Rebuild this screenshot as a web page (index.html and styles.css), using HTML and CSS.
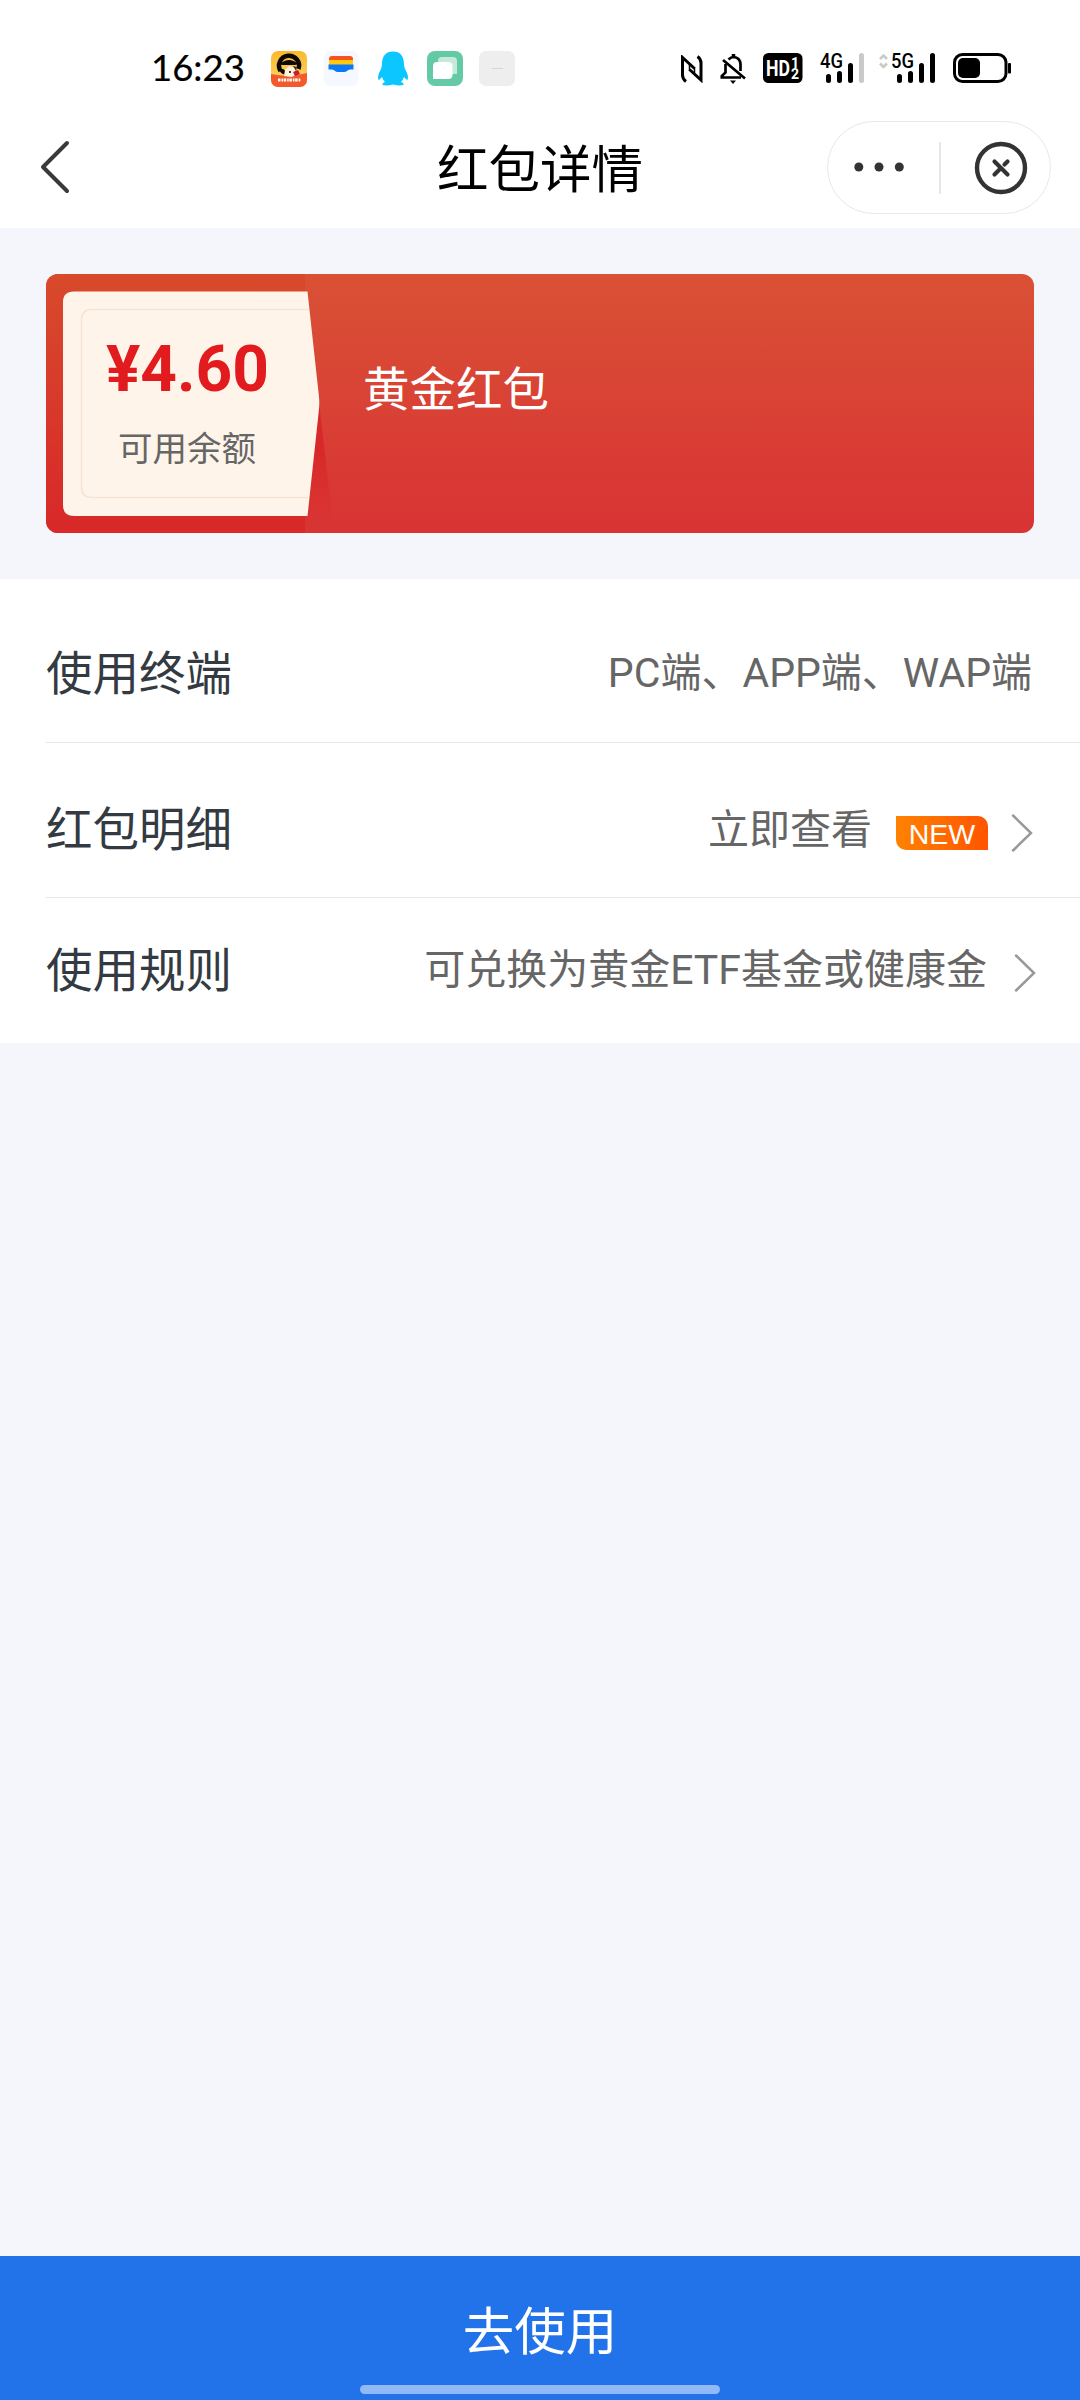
FILE: index.html
```html
<!DOCTYPE html>
<html lang="zh-CN">
<head>
<meta charset="utf-8">
<title>红包详情</title>
<link rel="stylesheet" href="styles.css">
</head>
<body>
<div class="screen">
  <header class="top">
    <div class="status">
      <span class="clock">16:23</span>
      <div class="apps">
        <svg width="36" height="36" viewBox="0 0 36 36">
          <defs>
            <linearGradient id="sun" x1="0" y1="0" x2="0" y2="1"><stop offset="0" stop-color="#f9b92c"/><stop offset="1" stop-color="#fdd66b"/></linearGradient>
            <clipPath id="r1"><rect width="36" height="36" rx="7"/></clipPath>
          </defs>
          <g clip-path="url(#r1)">
            <rect width="36" height="36" fill="url(#sun)"/>
            <path d="M0 23Q18 27 36 22V36H0Z" fill="#f4592c"/>
            <path d="M9.500 20A10 10 0 1 1 27.500 18" fill="none" stroke="#0c0805" stroke-width="4.500"/>
            <path d="M9 13Q18 5 27 13L24 14H11Z" fill="#0c0805"/>
            <path d="M8 18Q9 23 15 24L16 21L12 18Z" fill="#0c0805"/>
            <path d="M14 19l4-4 6 2 2 6-5 3-8-1z" fill="#fff3dc"/>
            <path d="M22 21l5-2 2 4-5 2z" fill="#c02030"/>
            <path d="M22 15l4 1-1 4zM18 20h2v2h-2z" fill="#4b2b3c"/>
            <path d="M7 29h23" stroke="#fff" stroke-width="3" stroke-dasharray="2.500 1 1.500 .7"/>
          </g>
        </svg>
        <svg width="36" height="36" viewBox="0 0 36 36">
          <rect x=".5" width="35" height="35" rx="7" fill="#f5f8fe"/>
          <path d="M6 10V8Q6 5 9 5H27Q30 5 30 8V10Z" fill="#f8521c"/>
          <path d="M6 9H30V14H6Z" fill="#ffc90f"/>
          <path d="M5.500 13.500H30.500V18.500H27Q25 18.500 24 20Q23 21 21 21H15Q13 21 12 20Q11 18.500 9 18.500H5.500Z" fill="#0a78f8"/>
        </svg>
        <svg width="36" height="36" viewBox="0 0 36 36">
          <path d="M18 .5C11 .5 7 5 7 13Q7 16 5.500 19Q2 25 3.500 29Q5 29 7 26Q8 29 10 31Q7 32 7.500 34Q12 35 18 33.500Q24 35 28.500 34Q29 32 26 31Q28 29 29 26Q31 29 32.500 29Q34 25 30.500 19Q29 16 29 13C29 5 25 .5 18 .5Z" fill="#0cc7ff"/>
        </svg>
        <svg width="36" height="36" viewBox="0 0 36 36">
          <rect width="36" height="35" rx="8" fill="#64caa6"/>
          <path d="M11 10Q11 6 15 6H26Q30 6 30 10V23H11Z" fill="#c3eadd"/>
          <path d="M6 15Q6 11 10 11H21Q25.500 11 25.500 15V24Q25.500 28 21 28H6Z" fill="#fff"/>
        </svg>
        <svg width="36" height="36" viewBox="0 0 36 36">
          <rect width="36" height="35" rx="7" fill="#eee"/>
          <path d="M13 17.500H24" stroke="#d6d6d6" stroke-width="1"/>
        </svg>
      </div>
      <div class="signals">
        <svg class="nfc" width="22" height="28" viewBox="0 0 22 28" fill="none" stroke="#000" stroke-width="3">
          <path d="M5 26.500Q1.500 24 1.500 20V2.500L13.500 13.500M8.500 14.500L20 25V8Q20 4 16.500 1.500"/><path d="M8.500 10V16M13.500 12V18" stroke-width="1.500"/>
        </svg>
        <svg class="bell" width="26" height="31" viewBox="0 0 26 31" fill="none" stroke="#000" stroke-width="2.700">
          <path d="M3 7L25 25.500"/><path d="M8.500 6.500Q11 4 13.500 4Q20 4.500 20.500 11V18"/><path d="M5.500 11V19.500L1.800 23V24.500H21"/>
          <path d="M13.500 1V4" stroke-width="3.500"/><path d="M10 27.500H16L13 31Z" fill="#000" stroke="none"/>
        </svg>
        <svg class="hd" width="40" height="30" viewBox="0 0 40 30">
          <rect width="39.500" height="30" rx="5.500" fill="#000"/>
          <g fill="#fff" font-family="Roboto, sans-serif" font-weight="700">
            <text x="3" y="22.500" font-size="22" textLength="24" lengthAdjust="spacingAndGlyphs">HD</text>
            <text x="28" y="14.500" font-size="14">1</text><text x="28" y="26" font-size="14">2</text>
          </g>
        </svg>
        <svg class="g4" width="45" height="38" viewBox="0 -8 45 38">
          <text x="0" y="14.500" font-family="Roboto, sans-serif" font-weight="500" font-size="19.500" textLength="23" lengthAdjust="spacingAndGlyphs">4G</text>
          <g stroke-width="5" stroke-linecap="round" stroke="#000"><path d="M8.500 23.500V27.500M19.500 20.500V27.500M30.500 12.500V27.500"/><path d="M41.500 2.500V27.500" stroke="#c9c9c9"/></g>
        </svg>
        <svg class="g5" width="57" height="38" viewBox="0 -8 57 38">
          <path d="M1 6L4.500 2.500L8 6M1 10.500L4.500 14L8 10.500" fill="none" stroke="#c9c9c9" stroke-width="2.600"/>
          <text x="12" y="14.500" font-family="Roboto, sans-serif" font-weight="500" font-size="19.500" textLength="23" lengthAdjust="spacingAndGlyphs">5G</text>
          <g stroke-width="5" stroke-linecap="round" stroke="#000"><path d="M20.500 23.500V27.500M31.500 20.500V27.500M42.500 12.500V27.500M53.500 2.500V27.500"/></g>
        </svg>
        <svg width="59" height="30" viewBox="0 0 59 30">
          <rect x="1.500" y="1.500" width="51.500" height="27" rx="8" fill="none" stroke="#000" stroke-width="3"/>
          <rect x="5" y="5" width="22" height="20" rx="5"/><rect x="55" y="10" width="3" height="10.500" rx="1"/>
        </svg>
      </div>
    </div>
    <nav class="nav">
      <svg class="back" width="30" height="54" viewBox="0 0 30 54"><path d="M27 3L3 27L27 51" fill="none" stroke="#3a3a3a" stroke-width="4" stroke-linecap="round" stroke-linejoin="round"/></svg>
      <h1 class="title">红包详情</h1>
      <div class="capsule">
        <svg class="dots" width="52" height="12" viewBox="0 0 52 12" fill="#333"><circle cx="5.800" cy="5" r="4.500"/><circle cx="26" cy="5" r="4.500"/><circle cx="46.300" cy="5" r="4.500"/></svg>
        <span class="split"></span>
        <svg class="close" width="54" height="54" viewBox="0 0 54 54" fill="none" stroke="#333"><circle cx="27" cy="27" r="24" stroke-width="4.400"/><path d="M20.500 20.500L33.500 33.500M20.500 33.500L25.500 28.500M30.500 23.500L33.500 20.500" stroke-width="4.200" stroke-linecap="round"/></svg>
      </div>
    </nav>
  </header>

  <section class="card">
    <svg class="card-art" width="988" height="259" viewBox="0 0 988 259">
      <defs>
        <linearGradient id="deep" x1="0" y1="0" x2="0" y2="1"><stop offset="0" stop-color="#d84a2c"/><stop offset="1" stop-color="#d82829"/></linearGradient>
        <linearGradient id="soft" x1="0" y1="0" x2="0" y2="1"><stop offset="0" stop-color="#d95135"/><stop offset="1" stop-color="#d93334"/></linearGradient>
        <linearGradient id="fade" x1="0" y1="0" x2="0" y2="1"><stop offset="0" stop-color="#d82829"/><stop offset=".4" stop-color="#d82829"/><stop offset="1" stop-color="#d82829" stop-opacity="0"/></linearGradient>
      </defs>
      <rect width="988" height="259" fill="url(#soft)"/>
      <rect width="259" height="259" fill="url(#deep)"/>
      <path d="M273 128L287 250H259V230Z" fill="url(#fade)"/>
      <path d="M28 17.500H261.500L272.800 121Q273.800 129 272.800 137L261.500 242H28Q17 242 17 231V28Q17 17.500 28 17.500Z" fill="#fff4ea"/>
      <path d="M262.500 35.500H46Q35.500 35.500 35.500 46V213Q35.500 223.500 46 223.500H262.500" fill="none" stroke="#f5e3d3" stroke-width="1.500"/>
    </svg>
    <div class="balance"><strong class="amount">¥4.60</strong><span class="caption">可用余额</span></div>
    <h2 class="card-name">黄金红包</h2>
  </section>

  <section class="list">
    <div class="row first"><span class="label">使用终端</span><span class="value">PC端、APP端、WAP端</span></div>
    <div class="row second"><span class="label">红包明细</span><span class="value">立即查看</span><span class="new">NEW</span>
      <svg class="arrow" width="22" height="38" viewBox="0 0 22 38"><path d="M2 1.500L20 19L2 36.500" fill="none" stroke="#999" stroke-width="2.500" stroke-linecap="round"/></svg></div>
    <div class="row third"><span class="label">使用规则</span><span class="value">可兑换为黄金ETF基金或健康金</span>
      <svg class="arrow" width="22" height="38" viewBox="0 0 22 38"><path d="M2 1.500L20 19L2 36.500" fill="none" stroke="#999" stroke-width="2.500" stroke-linecap="round"/></svg></div>
  </section>

  <footer class="use"><span class="use-text">去使用</span><span class="home"></span></footer>
</div>
</body>
</html>
```
FILE: styles.css
```css
* { box-sizing: border-box; }
body { margin: 0; background: #f4f6fb; font-family: Roboto, "Noto Sans CJK SC", sans-serif; }
svg { display: block; flex: none; }
h1, h2 { margin: 0; font-weight: 400; }
.screen { width: 1080px; height: 2400px; display: flex; flex-direction: column; background: #f4f6fb; }
.top { height: 228px; background: #fff; }

.status { height: 108px; display: flex; padding: 51px 68px 0 151px; }
.clock { width: 120px; font: 400 36.500px/37px Lato, sans-serif; margin-top: -2px; -webkit-text-stroke: .2px #000; white-space: nowrap; }
.apps { display: flex; gap: 16px; }
.signals { display: flex; margin-left: auto; padding-top: 2px; }
.nfc { margin: 2px 17px 0 0; }
.bell { margin-right: 17px; }
.hd { margin-right: 17px; }
.g4 { margin: -8px 14px 0 0; }
.g5 { margin: -8px 17px 0 0; }

.nav { height: 120px; display: grid; grid-template-columns: 1fr auto 1fr; padding: 13px 29px 0 40px; align-items: start; }
.back { margin-top: 19px; }
.title { font-size: 51.500px; line-height: 60px; margin: 20px 0 0 -11px; color: #000; }
.capsule { justify-self: end; width: 224px; height: 93px; border: 1.500px solid #e8e8e8; border-radius: 47px; display: flex; align-items: center; padding: 0 22px 0 25px; }
.split { width: 1.500px; height: 52px; background: #e6e6e6; margin-left: 34px; }
.close { margin-left: auto; }

.card { position: relative; width: 988px; height: 259px; margin: 46px 46px 0; border-radius: 12px; overflow: hidden; display: flex; }
.card-art { position: absolute; inset: 0; }
.balance { position: relative; width: 305px; padding: 58px 0 0 60px; display: flex; flex-direction: column; }
.amount { font-size: 64px; line-height: 76px; font-weight: 700; color: #e21b1f; }
.caption { font-size: 34.500px; line-height: 50px; color: #666; margin: 16px 0 0 12px; }
.card-name { position: relative; font-size: 46.500px; line-height: 60px; color: #fff; margin: 86px 0 0 12px; }

.list { margin-top: 46px; height: 464px; background: #fff; padding-left: 46px; }
.row { display: flex; align-items: flex-start; border-bottom: 1px solid #e6e6e6; }
.first { height: 164px; padding: 65px 48px 0 0; }
.second { height: 155px; padding: 57px 47px 0 0; }
.third { height: 145px; padding: 43px 44px 0 0; border: 0; }
.label { font-size: 46.500px; line-height: 60px; color: #333a42; }
.value { font-size: 41px; line-height: 60px; color: #666; margin-left: auto; white-space: nowrap; }
.first .value { margin-top: -1px; }
.third .value { margin-top: -1px; }
.new { width: 92px; height: 34px; margin: 16px 0 0 24px; border-radius: 0 10px 0 10px; background: linear-gradient(90deg, #ff8200, #ff5500); color: #fff; font: 400 28.500px/37px "Liberation Sans", sans-serif; text-align: center; }
.arrow { margin: 14px 0 0 23px; }
.third .arrow { margin: 13px 0 0 27px; }

.use { margin-top: auto; height: 144px; background: #2272ea; display: flex; flex-direction: column; align-items: center; color: #fff; padding: 45px 0 6px; }
.use-text { font-size: 51.500px; line-height: 64px; }
.home { width: 360px; height: 9px; border-radius: 5px; background: #91b9f5; margin-top: auto; }
```
